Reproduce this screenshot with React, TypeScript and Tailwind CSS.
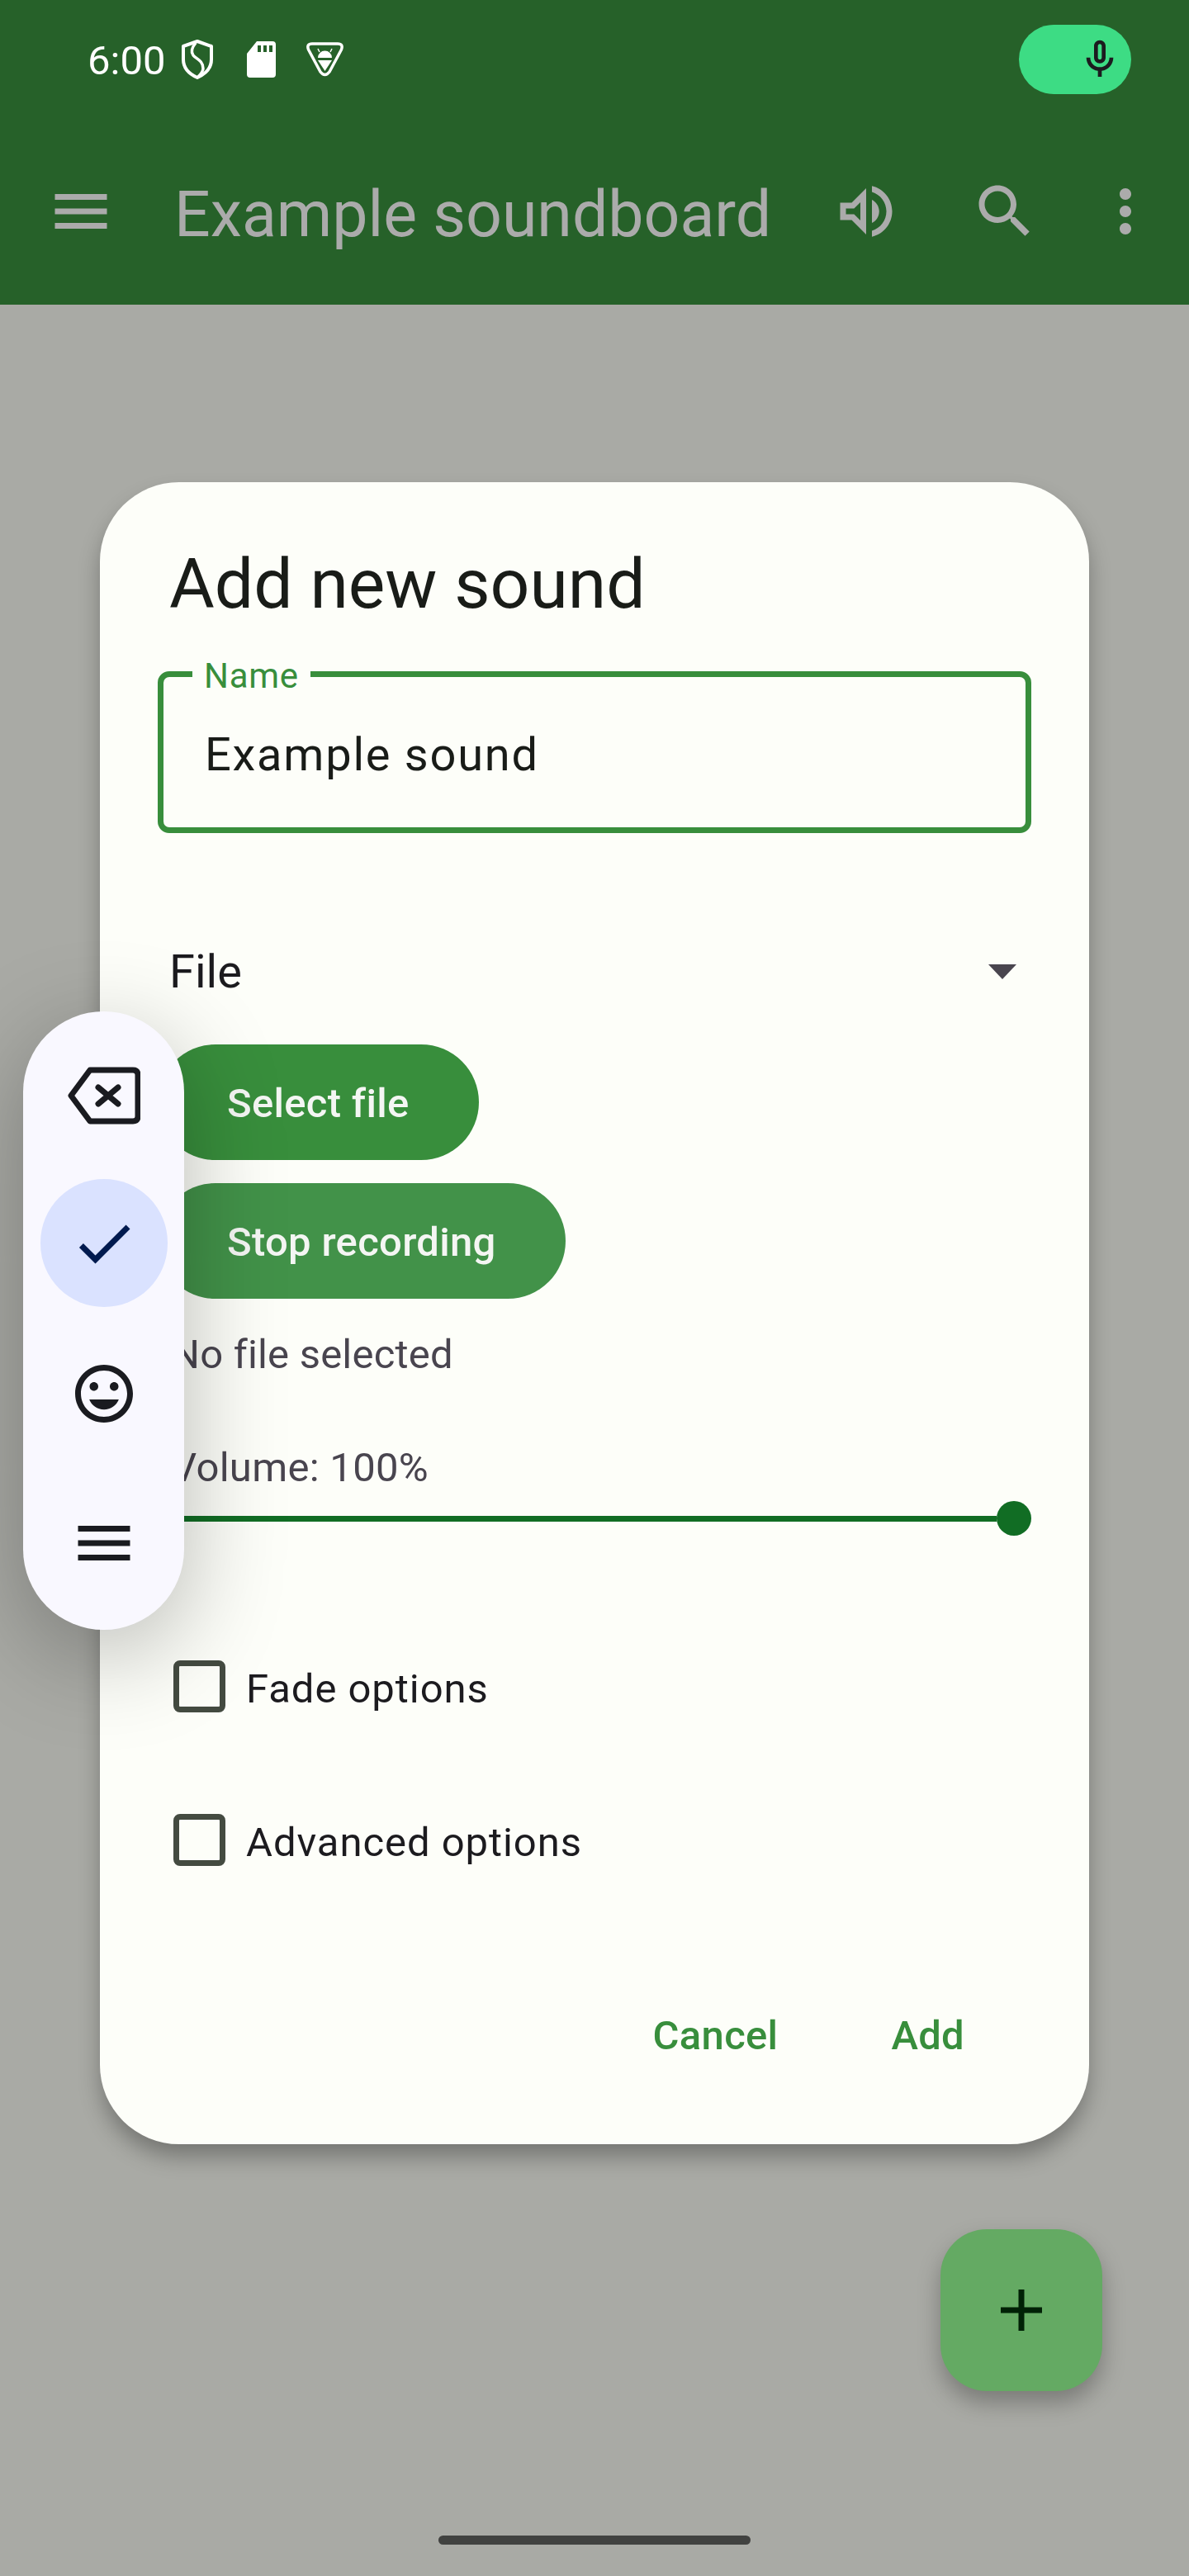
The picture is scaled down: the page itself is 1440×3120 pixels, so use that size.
const IconPath = ({ d, size = 84, className = '' }: { d: string; size?: number; className?: string }) => (
  <svg viewBox="0 0 24 24" width={size} height={size} fill="currentColor" className={`shrink-0 ${className}`}>
    <path d={d} />
  </svg>
);

const icons = {
  menu: 'M3 18h18v-2H3v2zm0-5h18v-2H3v2zm0-7v2h18V6H3z',
  volume:
    'M3 9v6h4l5 5V4L7 9H3zm7-.17v6.34L7.83 13H5v-2h2.83L10 8.83zM16.5 12c0-1.77-1.02-3.29-2.5-4.03v8.05c1.48-.73 2.5-2.25 2.5-4.02zM14 3.23v2.06c2.89.86 5 3.54 5 6.71s-2.11 5.85-5 6.71v2.06c4.01-.91 7-4.49 7-8.77 0-4.28-2.99-7.86-7-8.77z',
  search:
    'M15.5 14h-.79l-.28-.27C15.41 12.59 16 11.11 16 9.5 16 5.91 13.09 3 9.5 3S3 5.91 3 9.5 5.91 16 9.5 16c1.61 0 3.09-.59 4.23-1.57l.27.28v.79l5 4.99L20.49 19l-4.99-5zm-6 0C7.01 14 5 11.99 5 9.5S7.01 5 9.5 5 14 7.01 14 9.5 11.99 14 9.5 14z',
  more: 'M12 8c1.1 0 2-.9 2-2s-.9-2-2-2-2 .9-2 2 .9 2 2 2zm0 2c-1.1 0-2 .9-2 2s.9 2 2 2 2-.9 2-2-.9-2-2-2zm0 6c-1.1 0-2 .9-2 2s.9 2 2 2 2-.9 2-2-.9-2-2-2z',
  mic: 'M12 14c1.66 0 3-1.34 3-3V5c0-1.66-1.34-3-3-3S9 3.34 9 5v6c0 1.66 1.34 3 3 3zm-1-9c0-.55.45-1 1-1s1 .45 1 1v6c0 .55-.45 1-1 1s-1-.45-1-1V5zm6 6c0 2.76-2.24 5-5 5s-5-2.24-5-5H5c0 3.53 2.61 6.43 6 6.92V21h2v-3.08c3.39-.49 6-3.39 6-6.92h-2z',
  check: 'M9 16.17L4.83 12l-1.42 1.41L9 19 21 7l-1.41-1.41z',
  smile:
    'M11.99 2C6.47 2 2 6.48 2 12s4.47 10 9.99 10C17.52 22 22 17.52 22 12S17.52 2 11.99 2zM12 20c-4.42 0-8-3.58-8-8s3.58-8 8-8 8 3.58 8 8-3.58 8-8 8zm3.5-9c.83 0 1.5-.67 1.5-1.5S16.33 8 15.5 8 14 8.67 14 9.5s.67 1.5 1.5 1.5zm-7 0c.83 0 1.5-.67 1.5-1.5S9.33 8 8.5 8 7 8.67 7 9.5 7.67 11 8.5 11zm3.5 6.5c2.33 0 4.31-1.46 5.11-3.5H6.89c.8 2.04 2.78 3.5 5.11 3.5z',
};

const ShieldIcon = () => (
  <svg viewBox="0 0 40 48" width={40} height={48} fill="none" stroke="white" className="shrink-0">
    <path d="M20 2 L37 8 V24 C37 35 29 42 20 46 C11 42 3 35 3 24 V8 Z" strokeWidth={4} strokeLinejoin="round" />
    <path d="M18 4 C13 10 12 15 15 19 C18 23 27 25 27 35 C27 39 24 42 21 45" strokeWidth={3.5} />
  </svg>
);

const SdCardIcon = () => (
  <svg viewBox="0 0 35 44" width={35} height={44} className="shrink-0">
    <path
      fill="white"
      fillRule="evenodd"
      d="M12 0 H31 Q35 0 35 4 V40 Q35 44 31 44 H4 Q0 44 0 40 V15 Z M13 5 V13 H17 V5 Z M20 5 V13 H24 V5 Z M27 5 V13 H31 V5 Z"
    />
  </svg>
);

const AndroidTriangleIcon = () => (
  <svg viewBox="0 0 45 42" width={45} height={42} className="shrink-0">
    <path
      d="M7 2 H38 Q45 2 42.5 9 L28 36 Q22.5 43 17 36 L2.5 9 Q0 2 7 2 Z"
      fill="none"
      stroke="white"
      strokeWidth={3.5}
      strokeLinejoin="round"
    />
    <path d="M14 19 A8.5 8.5 0 0 1 31 19 Z" fill="white" />
    <path d="M16 12 L14 8 M29 12 L31 8" stroke="white" strokeWidth={1.5} />
    <path d="M14 22 H31 L22.5 35 Z" fill="white" />
  </svg>
);

const BackspaceIcon = () => (
  <svg viewBox="0 0 88 70" width={88} height={70} fill="none" stroke="#1a1b20" className="shrink-0">
    <path d="M4 35 L27 4 H79 Q85 4 85 10 V60 Q85 66 79 66 H27 Z" strokeWidth={7} strokeLinejoin="round" />
    <path d="M37 25 L61 45 M61 25 L37 45" strokeWidth={7} strokeLinecap="round" />
  </svg>
);

const Checkbox = ({ label, className = '' }: { label: string; className?: string }) => (
  <div className={`ml-[19px] flex h-[63px] items-center ${className}`}>
    <div className="h-[63px] w-[63px] rounded-[8px] border-[7px] border-[#444b41]" />
    <span className="ml-[25px] pt-[6px] text-[49px] leading-[63px] tracking-[0.95px] text-[#1c1b1f]">{label}</span>
  </div>
);

const PillButton = ({ label, className = '' }: { label: string; className?: string }) => (
  <div className={`flex h-[140px] w-fit items-center rounded-full px-[84px] pt-[4px] text-[49px] font-medium tracking-[0.3px] text-[#f4f6f3] ${className}`}>
    {label}
  </div>
);

export default function App() {
  return (
    <div className="relative h-[3120px] w-[1440px] overflow-hidden bg-[#a9aaa5] [font-family:Roboto,sans-serif]">
      {/* status bar + toolbar */}
      <header className="h-[369px] bg-[#266129]">
        <div className="flex h-[114px] items-center pt-[30px]">
          <span className="ml-[106px] pt-[3px] text-[49px] leading-[84px] text-white">6:00</span>
          <div className="ml-[19px]"><ShieldIcon /></div>
          <div className="ml-[40px]"><SdCardIcon /></div>
          <div className="ml-[37px]"><AndroidTriangleIcon /></div>
          <div className="mr-[70px] ml-auto flex h-[84px] w-[136px] items-center rounded-full bg-[#3ddc84] pl-[70px] text-[#1c1b1f]">
            <IconPath d={icons.mic} size={56} />
          </div>
        </div>
        <div className="mt-[100px] flex h-[84px] items-center text-[#ababab]">
          <IconPath d={icons.menu} className="ml-[56px]" />
          <span className="ml-[71px] pt-[8px] text-[77px] leading-[84px]">Example soundboard</span>
          <IconPath d={icons.volume} className="ml-auto" />
          <IconPath d={icons.search} className="ml-[84px]" />
          <IconPath d={icons.more} className="mr-[35px] ml-[62px]" />
        </div>
      </header>

      {/* dialog */}
      <main className="mt-[215px] ml-[121px] flex w-[1198px] flex-col rounded-[96px] bg-[#fdfef9] px-[70px] pt-[68px] pb-[63px] shadow-[0_16px_28px_-2px_rgba(0,0,0,0.32)]">
        <h1 className="ml-[14px] text-[84px] leading-[112px] font-normal text-[#191c18]">Add new sound</h1>

        <div className="relative mt-[49px] flex h-[196px] items-center rounded-[14px] border-[7px] border-[#388e3c] pt-[6px] pl-[50px]">
          <span className="text-[56px] leading-[66px] tracking-[1.75px] text-[#191c18]">Example sound</span>
          <span className="absolute top-[-26px] left-[35px] bg-[#fdfef9] px-[14px] text-[42px] leading-[50px] tracking-[0.7px] text-[#388e3c]">
            Name
          </span>
        </div>

        <div className="mt-[126px] flex h-[84px] items-center justify-between pr-[18px] pl-[14px]">
          <span className="text-[56px] leading-[66px] text-[#1c1b1f]">File</span>
          <svg viewBox="0 0 34 18" width={34} height={18} className="shrink-0">
            <path d="M0 0 H34 L17 18 Z" fill="#49454f" />
          </svg>
        </div>

        <PillButton label="Select file" className="mt-[46px] bg-[#388e3c]" />
        <PillButton label="Stop recording" className="mt-[28px] bg-[#429249]" />

        <p className="mt-[35px] ml-[16px] text-[49px] leading-[66px] tracking-[0.2px] text-[#49454f]">No file selected</p>
        <p className="mt-[71px] ml-[16px] text-[49px] leading-[66px] tracking-[0.3px] text-[#49454f]">Volume: 100%</p>

        <div className="mt-[7px] ml-[16px] flex h-[42px] items-center">
          <div className="h-[7px] flex-1 bg-[#116d24]" />
          <div className="h-[42px] w-[42px] rounded-full bg-[#116d24]" />
        </div>

        <Checkbox label="Fade options" className="mt-[151px]" />
        <Checkbox label="Advanced options" className="mt-[123px]" />

        <div className="mt-[134px] flex h-[140px] items-center justify-end gap-[137px] pt-[4px] pr-[81px] text-[49px] font-medium tracking-[0.3px] text-[#388e3c]">
          <span>Cancel</span>
          <span>Add</span>
        </div>
      </main>

      {/* floating keyboard toolbar */}
      <aside className="absolute top-[1225px] left-[28px] flex h-[749px] w-[195px] flex-col items-center rounded-full bg-[#f9f8ff] pt-[67px] text-[#1a1b20] shadow-[0_30px_120px_rgba(0,0,0,0.28)]">
        <BackspaceIcon />
        <div className="mt-[66px] flex h-[155px] w-[154px] items-center justify-center rounded-full bg-[#dae2ff] text-[#001a4f]">
          <IconPath d={icons.check} />
        </div>
        <IconPath d={icons.smile} className="mt-[63px]" />
        <IconPath d={icons.menu} className="mt-[97px]" />
      </aside>

      {/* fab */}
      <button className="absolute top-[2700px] left-[1139px] flex h-[196px] w-[196px] items-center justify-center rounded-[56px] bg-[#64aa63] text-[#002106] shadow-[0_14px_28px_rgba(0,0,0,0.28)]">
        <svg viewBox="0 0 50 50" width={50} height={50}>
          <path d="M0 21.5 H50 V28.5 H0 Z M21.5 0 H28.5 V50 H21.5 Z" fill="currentColor" />
        </svg>
      </button>

      {/* gesture bar */}
      <div className="absolute top-[3071px] left-[531px] h-[11px] w-[378px] rounded-full bg-[#414240]" />
    </div>
  );
}
